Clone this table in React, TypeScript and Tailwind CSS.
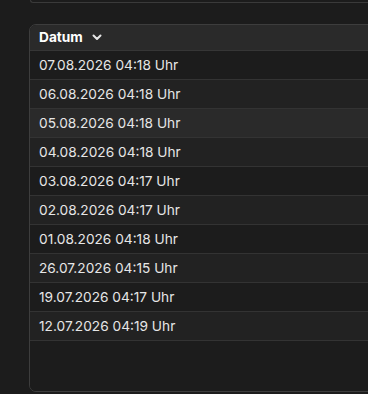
import React from "react";

const rows = [
  "07.08.2026 04:18 Uhr",
  "06.08.2026 04:18 Uhr",
  "05.08.2026 04:18 Uhr",
  "04.08.2026 04:18 Uhr",
  "03.08.2026 04:17 Uhr",
  "02.08.2026 04:17 Uhr",
  "01.08.2026 04:18 Uhr",
  "26.07.2026 04:15 Uhr",
  "19.07.2026 04:17 Uhr",
  "12.07.2026 04:19 Uhr",
];

export default function App() {
  return (
    <div
      className="w-[368px] h-[394px] overflow-hidden bg-[#1c1c1c] text-[#e6e6e6]"
      style={{ fontFamily: "Inter, 'Noto Sans', sans-serif" }}
    >
      <div className="ml-[30px] w-[400px] h-[3px] border-l border-b border-[#3a3a3a] rounded-bl-[6px]" />
      <div className="mt-[21px] ml-[29px] w-[400px] h-[368px] border border-[#3d3d3d] rounded-[7px] overflow-hidden flex flex-col">
        <div className="h-[26px] shrink-0 bg-[#2a2a2a] border-b border-[#363636] flex items-center pl-[9px] gap-[9px]">
          <span className="text-[13.7px] font-bold text-white">Datum</span>
          <svg width="10" height="7" viewBox="0 0 10 7" fill="none">
            <path d="M1.5 1.5 L5 5 L8.5 1.5" stroke="#e6e6e6" strokeWidth="2" strokeLinecap="round" strokeLinejoin="round" />
          </svg>
        </div>
        {rows.map((r, i) => (
          <div
            key={r}
            className={
              "h-[29px] shrink-0 border-b border-[#333333] flex items-center pl-[9px] text-[13.7px] " +
              (i === 2 ? "bg-[#2a2a2a]" : i % 2 === 1 ? "bg-[#222222]" : "bg-[#1c1c1c]")
            }
          >
            {r}
          </div>
        ))}
        <div className="flex-1 bg-[#1c1c1c]" />
      </div>
    </div>
  );
}
